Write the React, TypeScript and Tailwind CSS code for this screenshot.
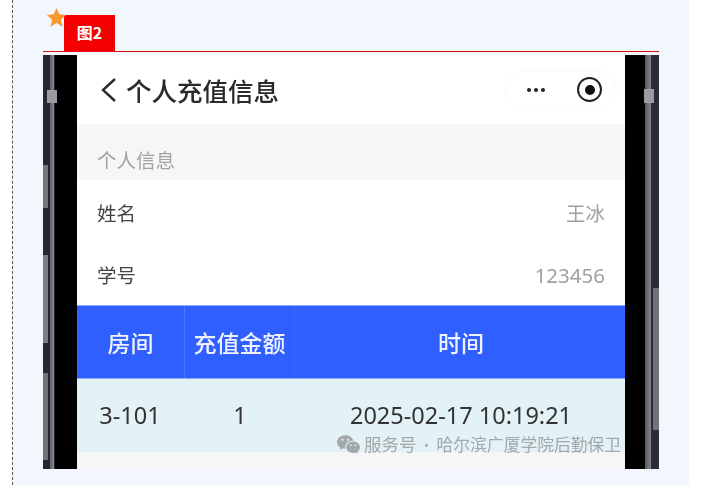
import { RiWechatFill } from "react-icons/ri";

const cjk = "font-['Noto_Sans_CJK_SC','Noto_Sans',sans-serif]";

function LeftEdge() {
    return (
        <div className="relative w-[34px] flex shrink-0 bg-black">
            <div className="w-[7px] bg-[#252832] flex flex-col">
                <div className="h-[110px]" />
                <div className="h-[43px] w-[5px] bg-[#74767a]" />
                <div className="h-[47px]" />
                <div className="h-[88px] w-[5px] bg-[#7c7d88]" />
                <div className="h-[30px]" />
                <div className="h-[87px] w-[5px] bg-[#6d7574]" />
            </div>
            <div className="w-[4px] bg-gradient-to-r from-[#5f6268] to-[#84868b]" />
            <div className="w-[1px] bg-[#2a2b30]" />
            <div className="flex-1 bg-black" />
            <div className="absolute left-[4px] top-[35px] w-[10px] h-[13px] bg-[#9a9c9f]" />
        </div>
    );
}

function RightEdge() {
    return (
        <div className="relative w-[34px] flex shrink-0 bg-black">
            <div className="w-[20px] bg-black" />
            <div className="w-[6px] bg-gradient-to-r from-[#55575c] to-[#85878c]" />
            <div className="w-[8px] bg-[#2a2d39] flex flex-col">
                <div className="h-[233px]" />
                <div className="h-[142px] ml-[2px] bg-[#6f7476]" />
            </div>
            <div className="absolute left-[19px] top-[34px] w-[10px] h-[14px] bg-[#9a9c9f]" />
        </div>
    );
}

function Phone() {
    return (
        <div className={`relative flex-1 flex flex-col bg-white overflow-hidden ${cjk}`}>
            <div className="h-[69px] flex items-center justify-between pl-[23px] pr-[8px] bg-white">
                <div className="flex items-center gap-[8px]">
                    <svg width="18" height="26" viewBox="0 0 18 26" fill="none" stroke="#2b2b2b" strokeWidth="2.4">
                        <path d="M15 2 L3 13 L15 24" />
                    </svg>
                    <span className="text-[25.5px] leading-none font-medium text-[#2a2a2a]">个人充值信息</span>
                </div>
                <div className="w-[112px] h-[37px] rounded-full border border-[#f9f9f9] flex items-center">
                    <div className="w-[56px] flex justify-center gap-[3px] pl-[3px]">
                        <span className="w-[4px] h-[4px] rounded-full bg-[#222]" />
                        <span className="w-[4px] h-[4px] rounded-full bg-[#222]" />
                        <span className="w-[4px] h-[4px] rounded-full bg-[#222]" />
                    </div>
                    <div className="ml-[15px] w-[25px] h-[25px] rounded-full border-[2.5px] border-[#222] flex items-center justify-center">
                        <span className="w-[10px] h-[10px] rounded-full bg-[#111]" />
                    </div>
                </div>
            </div>

            <div className="h-[56px] flex items-center pt-[15px] pl-[20px] bg-[#f6f6f6] text-[19.5px] text-[#a3a3a3]">个人信息</div>

            <div className="h-[125px] bg-white flex flex-col text-[19.5px]">
                <div className="h-[62px] pt-[4px] flex items-center justify-between pl-[20px] pr-[20px]">
                    <span className="text-[#444]">姓名</span>
                    <span className="text-[#a0a0a0]">王冰</span>
                </div>
                <div className="h-[62px] pt-[4px] flex items-center justify-between pl-[20px] pr-[20px]">
                    <span className="text-[#444]">学号</span>
                    <span className="text-[#a0a0a0] text-[20.5px] font-['Noto_Sans',sans-serif]">123456</span>
                </div>
            </div>

            <div className="h-[74px] grid grid-cols-[108px_110px_1fr] bg-[#2f5fff] border-y border-[#8fa9f5] text-[23px] font-medium text-[#eef2ff]">
                <div className="flex items-center justify-center border-r border-[#4c75fb]">房间</div>
                <div className="flex items-center justify-center border-r border-[#3a67fd]">充值金额</div>
                <div className="flex items-center justify-center pl-[2px]">时间</div>
            </div>

            <div className="h-[73px] grid grid-cols-[108px_110px_1fr] bg-[#e3f2f6] text-[23.5px] text-[#333] font-['Noto_Sans',sans-serif]">
                <div className="flex items-center justify-center pr-[2px]">3-101</div>
                <div className="flex items-center justify-center">1</div>
                <div className="flex items-center justify-center pl-[2px]">2025-02-17 10:19:21</div>
            </div>

            <div className="flex-1 bg-[#f6f6f6]" />

            <div className="absolute left-[259px] top-[376px] h-[26px] flex items-center gap-[3px] text-[#a2a8aa] whitespace-nowrap">
                <RiWechatFill className="w-[25px] h-[25px] shrink-0 text-[#a3a8a8]" />
                <span className="text-[17.5px] leading-none">服务号</span>
                <span className="w-[14px] text-center text-[14px] leading-none">·</span>
                <span className="text-[16.8px] leading-none">哈尔滨广厦学院后勤保卫</span>
            </div>
        </div>
    );
}

export default function App() {
    return (
        <div className="w-[703px] h-[485px] bg-white flex overflow-hidden">
            <div className="w-[12px] shrink-0" />
            <div className="relative w-[677px] h-full bg-[#f2f7fe] border-l border-dashed border-[#555] pl-[30px] pr-[30px] pt-[15px]">
                <svg className="absolute left-[33px] top-[7px]" width="21" height="21" viewBox="0 0 24 24">
                    <path d="M12 1 L15.2 8.4 L23 9.2 L17 14.5 L18.9 22.5 L12 18.2 L5.1 22.5 L7 14.5 L1 9.2 L8.8 8.4 Z" fill="#f9982f" />
                </svg>
                <div className="border-b border-[#d9100f] h-[37px]">
                    <div className="ml-[21px] w-[51px] h-[36px] pb-[3px] bg-[#f50000] flex items-center justify-center text-white text-[16px] font-bold font-['Noto_Sans_CJK_SC',sans-serif]">
                        图2
                    </div>
                </div>
                <div className="mt-[3px] h-[414px] flex blur-[0.4px] overflow-hidden">
                    <LeftEdge />
                    <Phone />
                    <RightEdge />
                </div>
            </div>
        </div>
    );
}
